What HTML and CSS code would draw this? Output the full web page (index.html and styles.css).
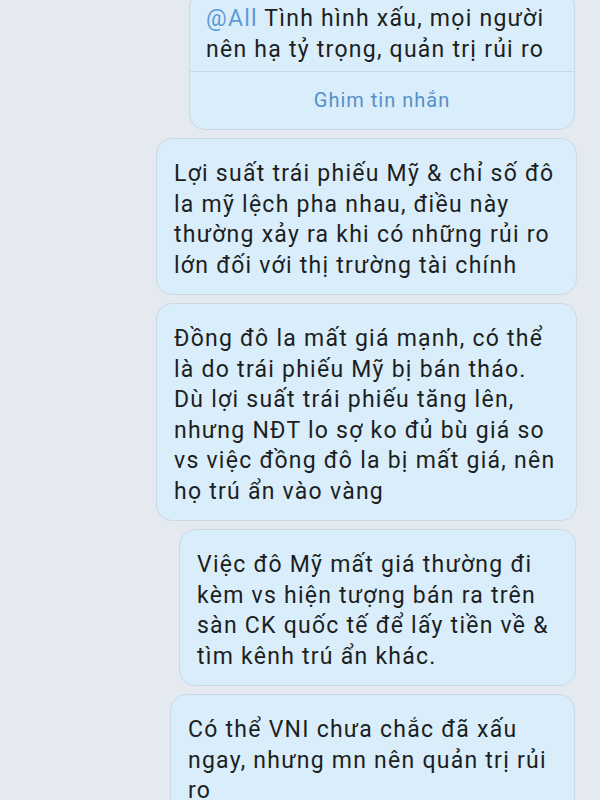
FILE: index.html
```html
<!DOCTYPE html>
<html lang="vi">
<head>
<meta charset="utf-8">
<link rel="stylesheet" href="styles.css">
</head>
<body>
<div class="chat">
  <div class="bubble pinned">
    <div class="msg"><span class="mention">@All</span> Tình hình xấu, mọi người<br>nên hạ tỷ trọng, quản trị rủi ro</div>
    <div class="pin">Ghim tin nhắn</div>
  </div>
  <div class="bubble w2"><div class="msg">Lợi suất trái phiếu Mỹ &amp; chỉ số đô<br>la mỹ lệch pha nhau, điều này<br>thường xảy ra khi có những rủi ro<br>lớn đối với thị trường tài chính</div></div>
  <div class="bubble w3"><div class="msg">Đồng đô la mất giá mạnh, có thể<br>là do trái phiếu Mỹ bị bán tháo.<br>Dù lợi suất trái phiếu tăng lên,<br>nhưng NĐT lo sợ ko đủ bù giá so<br>vs việc đồng đô la bị mất giá, nên<br>họ trú ẩn vào vàng</div></div>
  <div class="bubble w4"><div class="msg">Việc đô Mỹ mất giá thường đi<br>kèm vs hiện tượng bán ra trên<br>sàn CK quốc tế để lấy tiền về &amp;<br>tìm kênh trú ẩn khác.</div></div>
  <div class="bubble w5"><div class="msg">Có thể VNI chưa chắc đã xấu<br>ngay, nhưng mn nên quản trị rủi<br>ro</div></div>
</div>
</body>
</html>
```
FILE: styles.css
```css
html, body {
  margin: 0;
  padding: 0;
  background: #e5eaf1;
  height: 100%;
  overflow: hidden;
}
.chat {
  display: flex;
  flex-direction: column;
  align-items: flex-end;
  gap: 8px;
  padding-right: 25px;
  font-family: Roboto, "Noto Sans", sans-serif;
  color: #1c1f22;
}
.bubble {
  box-sizing: border-box;
  background: #daedfb;
  border: 1px solid #cbd9e6;
  border-radius: 16px;
}
.msg {
  font-size: 23px;
  letter-spacing: 1.25px;
  line-height: 30.5px;
  padding: 20px 6px 13px 17px;
  white-space: nowrap;
}
.mention { color: #5d9bd6; }
.pinned {
  width: 386px;
  margin-top: -9px;
}
.pinned .msg {
  padding: 12px 6px 6px 16px;
}
.pin {
  border-top: 1px solid #c8d7e4;
  text-align: center;
  color: #5590c8;
  font-size: 20px;
  letter-spacing: 1px;
  line-height: 57px;
}
.w2 { width: 421px; margin-right: -2px; }
.w3 { width: 421px; margin-right: -2px; }
.w4 { width: 397px; margin-right: -1px; }
.w5 { width: 405px; }
```
